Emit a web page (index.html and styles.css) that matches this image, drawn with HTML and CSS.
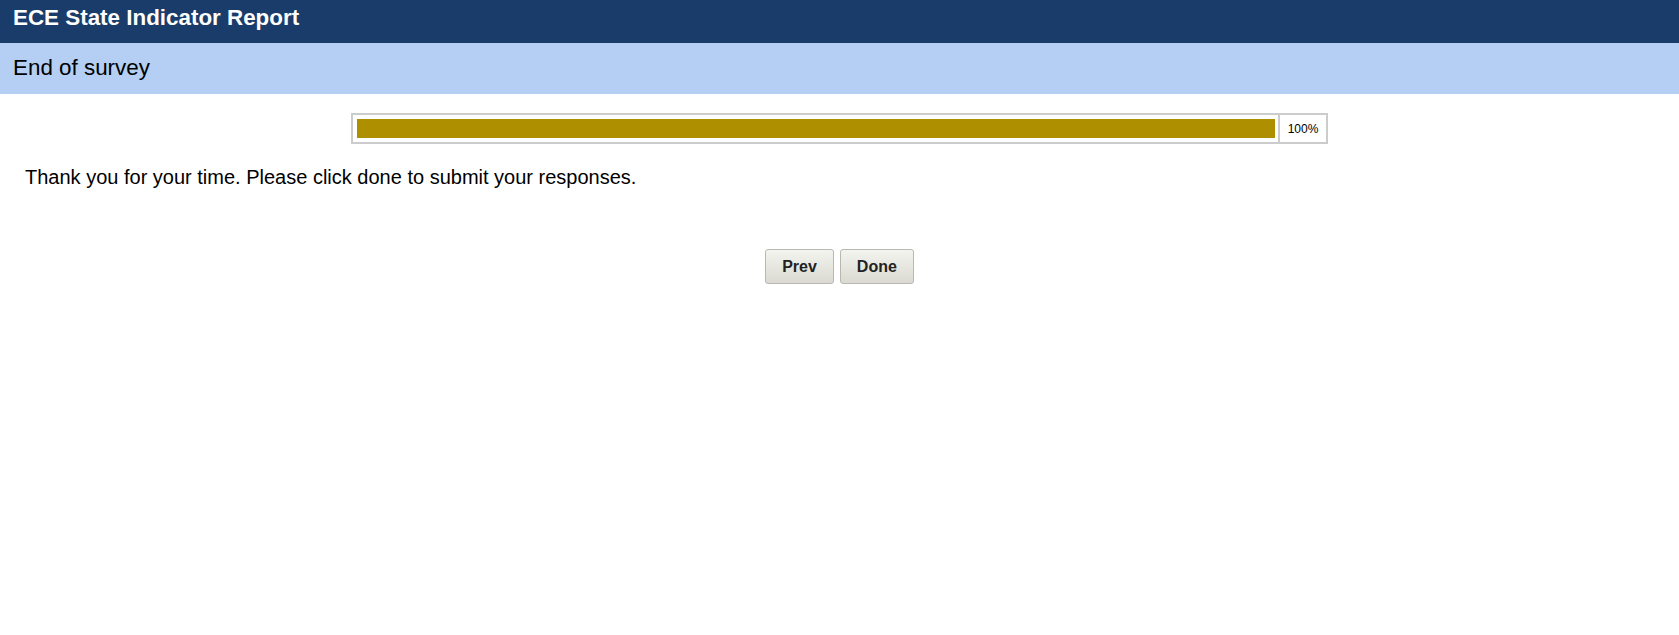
FILE: index.html
```html
<html>
<head>
<link rel="stylesheet" href="styles.css">
</head>
<body>
<div class="top-bar">ECE State Indicator Report</div>
<div class="page-title">End of survey</div>

<table class="progress">
  <tr>
    <td class="progress-track"><div class="progress-fill" style="width:100%"></div></td>
    <td class="progress-label">100%</td>
  </tr>
</table>

<p class="message">Thank you for your time. Please click done to submit your responses.</p>

<div class="nav-buttons">
  <button class="nav-btn">Prev</button>
  <button class="nav-btn">Done</button>
</div>
</body>
</html>
```

FILE: styles.css
```css
body {
  margin: 0;
  background: #fff;
  font-family: "Liberation Sans", Arial, sans-serif;
  color: #000;
}
.top-bar {
  background: #1a3c6a;
  color: #fff;
  font-weight: bold;
  font-size: 22.4px;
  height: 38px;
  line-height: 26px;
  padding: 5px 13px 0;
}
.page-title {
  background: #b4cff3;
  font-size: 22.4px;
  height: 51px;
  line-height: 50px;
  padding: 0 13px;
}
.progress {
  width: 977px;
  margin: 19px auto 0;
  border: 2px solid #ccc;
  border-collapse: collapse;
}
.progress td {
  padding: 0;
}
.progress-track {
  padding: 4px 3px 4px 4px !important;
}
.progress-fill {
  height: 19px;
  background: #ae8f00;
}
.progress-label {
  width: 46px;
  border-left: 2px solid #ccc;
  font-size: 12px;
  text-align: center;
}
.message {
  font-size: 20px;
  margin: 22px 0 0 25px;
  line-height: 23px;
}
.nav-buttons {
  display: flex;
  justify-content: center;
  gap: 6px;
  margin-top: 60px;
}
.nav-btn {
  font-family: "Liberation Sans", Arial, sans-serif;
  font-weight: bold;
  font-size: 16px;
  color: #222;
  height: 35px;
  padding: 0 16px;
  border: 1px solid #b8b8b0;
  border-radius: 3px;
  background: linear-gradient(#f4f4ef, #dadad2);
}
```
